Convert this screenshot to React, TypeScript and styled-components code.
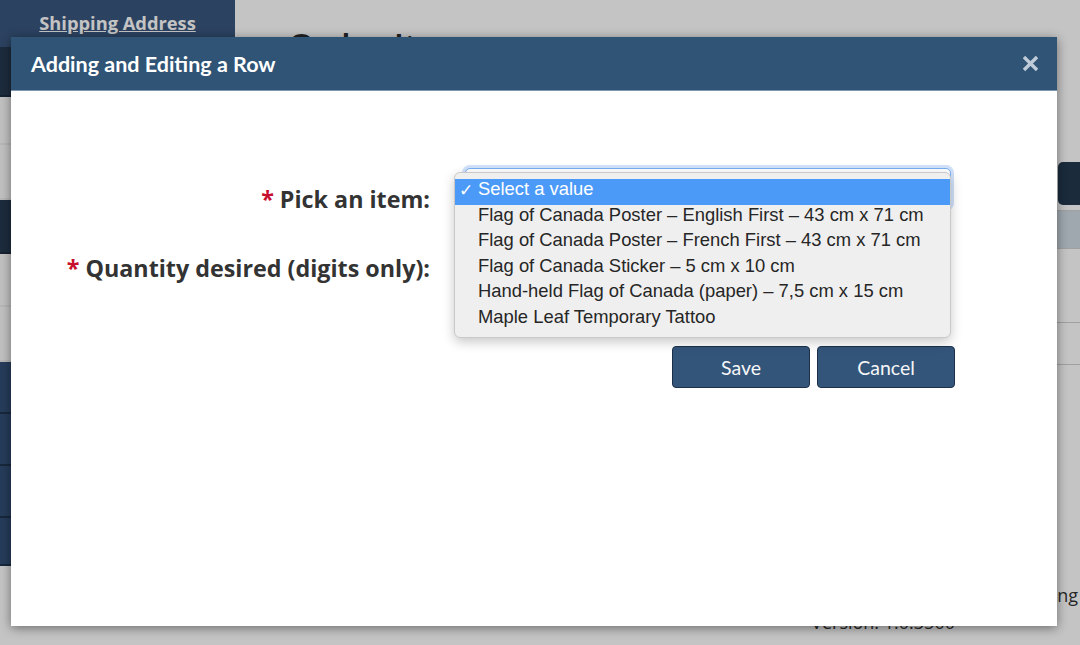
import React from "react";
import styled, { createGlobalStyle } from "styled-components";

const Global = createGlobalStyle`
  html, body { margin: 0; padding: 0; }
  body { width: 1080px; height: 645px; overflow: hidden; background: #fff; font-family: "Open Sans", "Liberation Sans", sans-serif; }
  #root { width: 1080px; height: 645px; }
  * { box-sizing: border-box; }
`;

const Page = styled.div`
  position: relative;
  width: 1080px;
  height: 645px;
  overflow: hidden;
  display: flex;
  background: #ffffff;
`;

const Sidebar = styled.nav`
  width: 235px;
  flex: none;
  display: flex;
  flex-direction: column;
  background: #ffffff;
`;

const SideTop = styled.div`
  height: 47px;
  background: #39567d;
  display: flex;
  justify-content: center;
  padding-top: 11px;
`;

const SideLink = styled.a`
  color: #ffffff;
  font-family: "Open Sans", sans-serif;
  font-weight: 700;
  font-size: 18.3px;
  text-decoration: underline;
  line-height: 24px;
`;

const NavItem = styled.div<{ $tone: "dark" | "light" | "navy"; $h: number }>`
  height: ${(p) => p.$h}px;
  background: ${(p) => (p.$tone === "dark" ? "#253850" : p.$tone === "navy" ? "#324f76" : "#fbfbfb")};
  border-bottom: 2px solid ${(p) => (p.$tone === "navy" ? "#1f3450" : p.$tone === "light" ? "#eeeeee" : "#1d2d40")};
`;

const Main = styled.main`
  flex: 1;
  padding-left: 53px;
  display: flex;
  flex-direction: column;
`;

const Heading = styled.h1`
  margin: 26px 0 0;
  font-family: "Open Sans", sans-serif;
  font-weight: 600;
  font-size: 34px;
  line-height: 1.2;
  color: #2c2c2c;
`;

const Content = styled.div`
  width: 840px;
  display: flex;
  flex-direction: column;
`;

const Toolbar = styled.div`
  margin-top: 95px;
  display: flex;
  justify-content: flex-end;
`;

const DarkButton = styled.div`
  width: 70px;
  height: 43px;
  background: #24384e;
  border-radius: 5px;
`;

const Table = styled.div`
  margin-top: 5px;
  border: 1px solid #d0d0d0;
  display: flex;
  flex-direction: column;
`;

const TableRow = styled.div<{ $head?: boolean; $h: number }>`
  height: ${(p) => p.$h}px;
  background: ${(p) => (p.$head ? "#cfdbe4" : "#ffffff")};
  border-bottom: 1px solid #d0d0d0;
  &:last-child { border-bottom: none; }
`;

const LinkLine = styled.div`
  margin-top: 218px;
  padding-right: 50px;
  display: flex;
  justify-content: flex-end;
  font-family: "Open Sans", sans-serif;
  font-size: 18px;
  line-height: 24px;
  color: #333;
`;

const Version = styled.div`
  margin-top: 4px;
  padding-right: 173px;
  text-align: right;
  font-family: "Open Sans", sans-serif;
  font-size: 18px;
  line-height: 22px;
  color: #333;
`;

const Overlay = styled.div`
  position: absolute;
  inset: 0;
  background: rgba(0, 0, 0, 0.23);
`;

const Modal = styled.div`
  position: absolute;
  left: 11px;
  top: 37px;
  width: 1046px;
  height: 589px;
  background: #ffffff;
  box-shadow: 0 2px 10px rgba(0, 0, 0, 0.45);
  display: flex;
  flex-direction: column;
`;

const ModalHeader = styled.div`
  height: 54px;
  flex: none;
  background: #2f5475;
  border-bottom: 1px solid #7f97ae;
  display: flex;
  align-items: center;
  justify-content: space-between;
  padding: 0 17px 0 20px;
`;

const ModalTitle = styled.h2`
  margin: 0;
  font-family: "Lato", sans-serif;
  font-weight: 700;
  font-size: 21.5px;
  color: #ffffff;
`;

const CloseButton = styled.button`
  border: none;
  background: transparent;
  padding: 0;
  width: 20px;
  height: 20px;
  display: flex;
  align-items: center;
  justify-content: center;
  cursor: pointer;
`;

const ModalBody = styled.div`
  padding: 77px 0 0 0;
  display: flex;
  flex-direction: column;
`;

const FormGrid = styled.div`
  display: grid;
  grid-template-columns: 1fr 486px;
  grid-template-rows: 40px 46px;
  column-gap: 35px;
  row-gap: 24px;
  padding-right: 106px;
`;

const Label = styled.label<{ $offset: number }>`
  justify-self: end;
  align-self: start;
  padding-top: ${(p) => p.$offset}px;
  font-family: "Open Sans", sans-serif;
  font-weight: 700;
  font-size: 23.3px;
  line-height: 31px;
  color: #333333;
  white-space: nowrap;
`;

const Required = styled.span`
  color: #c8102e;
  margin-right: 6px;
`;

const SelectField = styled.div`
  position: relative;
  height: 40px;
  border: 1px solid #7aaef2;
  border-radius: 5px;
  box-shadow: 0 0 0 3px rgba(120, 170, 240, 0.35);
  background: #ffffff;
`;

const Popup = styled.ul`
  position: absolute;
  left: -12px;
  top: 3px;
  width: 497px;
  margin: 0;
  padding: 6px 0 4px;
  list-style: none;
  background: #efefef;
  border: 1px solid #c9c9c9;
  border-radius: 6px;
  box-shadow: 0 4px 12px rgba(0, 0, 0, 0.22);
  z-index: 2;
`;

const Option = styled.li<{ $selected?: boolean }>`
  position: relative;
  height: 25.6px;
  line-height: 20px;
  padding-left: 23px;
  font-family: "Liberation Sans", Arial, sans-serif;
  font-size: 18.4px;
  color: ${(p) => (p.$selected ? "#ffffff" : "#262626")};
  background: ${(p) => (p.$selected ? "#4c9af8" : "transparent")};
  white-space: nowrap;
`;

const Check = styled.span`
  position: absolute;
  left: 4px;
  top: 1px;
  font-family: "DejaVu Sans", sans-serif;
  font-size: 17px;
  line-height: 20px;
  font-weight: 700;
`;

const TextInput = styled.div`
  height: 44px;
  margin-top: 2px;
  border: 1px solid #c4c4c4;
  border-radius: 5px;
  background: #ffffff;
`;

const Actions = styled.div`
  margin-top: 68px;
  padding-right: 102px;
  display: flex;
  justify-content: flex-end;
  gap: 7px;
`;

const ActionButton = styled.button`
  width: 138px;
  height: 42px;
  background: #34557a;
  border: 1px solid #1c3149;
  border-radius: 4px;
  color: #f4f6f8;
  font-family: "Lato", sans-serif;
  font-size: 19.5px;
  cursor: pointer;
`;

const options = [
  "Select a value",
  "Flag of Canada Poster – English First – 43 cm x 71 cm",
  "Flag of Canada Poster – French First – 43 cm x 71 cm",
  "Flag of Canada Sticker – 5 cm x 10 cm",
  "Hand-held Flag of Canada (paper) – 7,5 cm x 15 cm",
  "Maple Leaf Temporary Tattoo",
];

export default function App() {
  return (
    <>
      <Global />
      <Page>
        <Sidebar>
          <SideTop>
            <SideLink>Shipping Address</SideLink>
          </SideTop>
          <NavItem $tone="dark" $h={50} />
          <NavItem $tone="light" $h={48} />
          <NavItem $tone="light" $h={55} />
          <NavItem $tone="dark" $h={54} />
          <NavItem $tone="light" $h={53} />
          <NavItem $tone="light" $h={55} />
          <NavItem $tone="navy" $h={52} />
          <NavItem $tone="navy" $h={52} />
          <NavItem $tone="navy" $h={52} />
          <NavItem $tone="navy" $h={48} />
        </Sidebar>
        <Main>
          <Content>
            <Heading>Order Items</Heading>
            <Toolbar>
              <DarkButton />
            </Toolbar>
            <Table>
              <TableRow $head $h={38} />
              <TableRow $h={74} />
              <TableRow $h={41} />
            </Table>
            <LinkLine>Continue Shopping</LinkLine>
            <Version>Version: 1.0.3500</Version>
          </Content>
        </Main>
        <Overlay />
        <Modal>
          <ModalHeader>
            <ModalTitle>Adding and Editing a Row</ModalTitle>
            <CloseButton aria-label="Close">
              <svg width="17" height="17" viewBox="0 0 16 16">
                <path d="M3 3 L13 13 M13 3 L3 13" stroke="#bfcbd8" strokeWidth="3.2" strokeLinecap="square" />
              </svg>
            </CloseButton>
          </ModalHeader>
          <ModalBody>
            <FormGrid>
              <Label $offset={16}>
                <Required>*</Required>Pick an item:
              </Label>
              <SelectField>
                <Popup>
                  {options.map((o, i) => (
                    <Option key={o} $selected={i === 0}>
                      {i === 0 && <Check>✓</Check>}
                      {o}
                    </Option>
                  ))}
                </Popup>
              </SelectField>
              <Label $offset={21}>
                <Required>*</Required>Quantity desired (digits only):
              </Label>
              <TextInput />
            </FormGrid>
            <Actions>
              <ActionButton>Save</ActionButton>
              <ActionButton>Cancel</ActionButton>
            </Actions>
          </ModalBody>
        </Modal>
      </Page>
    </>
  );
}
